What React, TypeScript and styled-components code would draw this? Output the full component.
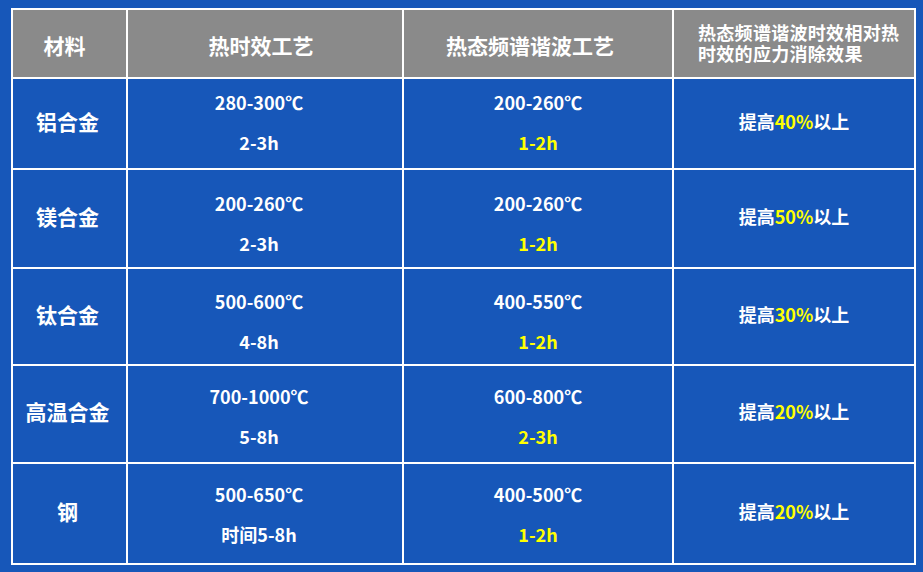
import React from 'react';
import styled, { createGlobalStyle } from 'styled-components';

const GlobalStyle = createGlobalStyle`
  html, body {
    margin: 0;
    padding: 0;
    background: #1757b9;
  }
  body {
    font-family: "Noto Sans CJK SC", "Noto Sans", sans-serif;
    -webkit-font-smoothing: antialiased;
  }
`;

interface Row {
  material: string;
  heatTemp: string;
  heatTime: string;
  vibTemp: string;
  vibTime: string;
  gain: string;
  height: number;
  shift: number; // vertical nudge of the two-line values
}

const ROWS: Row[] = [
  { material: '铝合金', heatTemp: '280-300℃', heatTime: '2-3h', vibTemp: '200-260℃', vibTime: '1-2h', gain: '40%', height: 89, shift: -2 },
  { material: '镁合金', heatTemp: '200-260℃', heatTime: '2-3h', vibTemp: '200-260℃', vibTime: '1-2h', gain: '50%', height: 97, shift: 4 },
  { material: '钛合金', heatTemp: '500-600℃', heatTime: '4-8h', vibTemp: '400-550℃', vibTime: '1-2h', gain: '30%', height: 95, shift: 4 },
  { material: '高温合金', heatTemp: '700-1000℃', heatTime: '5-8h', vibTemp: '600-800℃', vibTime: '2-3h', gain: '20%', height: 96, shift: 2 },
  { material: '钢', heatTemp: '500-650℃', heatTime: '时间5-8h', vibTemp: '400-500℃', vibTime: '1-2h', gain: '20%', height: 99, shift: 0 },
];

const App: React.FC = () => {
  return (
    <>
      <GlobalStyle />
      <Page>
        <Table>
          <colgroup>
            <col style={{ width: 113 }} />
            <col style={{ width: 274 }} />
            <col style={{ width: 268 }} />
            <col style={{ width: 240 }} />
          </colgroup>
          <thead>
            <tr>
              <HeadCell $padRight={10}>材料</HeadCell>
              <HeadCell $padRight={8}>热时效工艺</HeadCell>
              <HeadCell $padRight={16}>热态频谱谐波工艺</HeadCell>
              <NoteHeadCell>
                <NoteLine>热态频谱谐波时效相对热</NoteLine>
                <NoteLine>时效的应力消除效果</NoteLine>
              </NoteHeadCell>
            </tr>
          </thead>
          <tbody>
            {ROWS.map((row) => (
              <BodyRow key={row.material} $height={row.height}>
                <NameCell>{row.material}</NameCell>
                <ValueCell $shift={row.shift} $padRight={12}>
                  <Line>{row.heatTemp}</Line>
                  <Line>{row.heatTime}</Line>
                </ValueCell>
                <ValueCell $shift={row.shift}>
                  <Line>{row.vibTemp}</Line>
                  <Line $accent>{row.vibTime}</Line>
                </ValueCell>
                <EffectCell>
                  提高<Accent>{row.gain}</Accent>以上
                </EffectCell>
              </BodyRow>
            ))}
          </tbody>
        </Table>
      </Page>
    </>
  );
};

// --- Styled Components ---

const Page = styled.div`
  width: 923px;
  height: 572px;
  padding: 8px 0 0 11px;
  box-sizing: border-box;
`;

const Table = styled.table`
  table-layout: fixed;
  border-collapse: separate;
  border-spacing: 2px;
  background: #ffffff;
  width: 905px;
`;

const HeadCell = styled.th<{ $padRight?: number }>`
  height: 67px;
  padding: 2px ${(p) => p.$padRight ?? 0}px 0 0;
  background: #8a8a8a;
  color: #ffffff;
  font-weight: 700;
  font-size: 21px;
  line-height: 24px;
  text-align: center;
  vertical-align: middle;
  box-sizing: border-box;
`;

const NoteHeadCell = styled(HeadCell)`
  padding: 0 0 2px 24px;
  font-size: 18px;
  letter-spacing: 0.3px;
  text-align: left;
`;

const NoteLine = styled.div`
  line-height: 21px;
  white-space: nowrap;
`;

const BodyRow = styled.tr<{ $height: number }>`
  height: ${(p) => p.$height}px;
`;

const BaseCell = styled.td`
  padding: 0;
  background: #1757b9;
  color: #ffffff;
  font-weight: 700;
  text-align: center;
  vertical-align: middle;
`;

const NameCell = styled(BaseCell)`
  font-size: 21px;
  padding: 0 4px 6px 0;
`;

const ValueCell = styled(BaseCell)<{ $shift: number; $padRight?: number }>`
  font-size: 18px;
  padding-top: ${(p) => Math.max(0, p.$shift * 2)}px;
  padding-bottom: ${(p) => Math.max(0, -p.$shift * 2)}px;
  padding-right: ${(p) => p.$padRight ?? 0}px;
`;

const Line = styled.div<{ $accent?: boolean }>`
  line-height: 40px;
  color: ${(p) => (p.$accent ? '#ffff00' : '#ffffff')};
`;

const EffectCell = styled(BaseCell)`
  font-size: 18px;
  padding-bottom: 6px;
`;

const Accent = styled.span`
  color: #ffff00;
`;

export default App;
